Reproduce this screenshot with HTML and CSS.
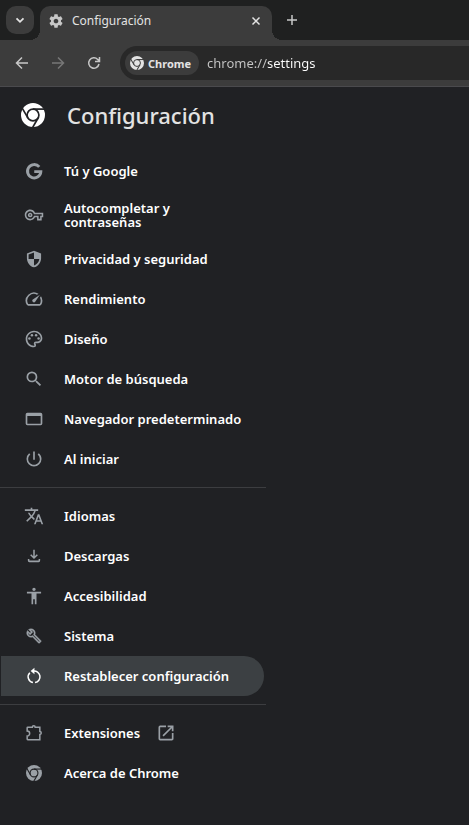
FILE: index.html
```html
<!DOCTYPE html>
<html lang="es">
<head>
<meta charset="utf-8">
<meta name="viewport" content="width=device-width, initial-scale=1">
<title>Configuración</title>
<link rel="stylesheet" href="styles.css">
</head>
<body>
<svg class="defs" aria-hidden="true">
  <mask id="chrome-mask">
    <circle cx="12" cy="12" r="12" fill="#fff"/>
    <g stroke="#000" stroke-width="1.7" fill="none">
      <circle cx="12" cy="12" r="5.9"/>
      <path d="M12 6.1H24"/>
      <path d="M12 6.1H24" transform="rotate(120 12 12)"/>
      <path d="M12 6.1H24" transform="rotate(240 12 12)"/>
    </g>
  </mask>
  <symbol id="chrome" viewBox="0 0 24 24"><rect width="24" height="24" mask="url(#chrome-mask)"/></symbol>
</svg>

<header class="browser">
  <div class="tabstrip">
    <button class="tab-search" aria-label="Buscar pestañas"><svg viewBox="0 0 12 12"><path class="line bold" d="M2.500 4.300 6 7.800l3.500-3.500"/></svg></button>
    <div class="tab">
      <svg class="tab-icon" viewBox="0 0 24 24"><path d="M19.430 12.980c.04-.32.07-.64.07-.98s-.03-.66-.07-.98l2.110-1.650c.19-.15.24-.42.12-.64l-2-3.460c-.12-.22-.39-.3-.61-.22l-2.490 1c-.52-.4-1.080-.73-1.690-.98l-.38-2.650C14.460 2.180 14.250 2 14 2h-4c-.25 0-.46.18-.49.42l-.38 2.650c-.61.25-1.170.59-1.690.98l-2.490-1c-.23-.09-.49 0-.61.22l-2 3.460c-.13.22-.07.49.12.64l2.110 1.650c-.04.32-.07.65-.07.98s.03.66.07.98l-2.110 1.650c-.19.15-.24.42-.12.64l2 3.460c.12.22.39.3.61.22l2.490-1c.52.4 1.080.73 1.690.98l.38 2.650c.03.24.24.42.49.42h4c.25 0 .46-.18.49-.42l.38-2.650c.61-.25 1.170-.59 1.690-.98l2.490 1c.23.09.49 0 .61-.22l2-3.460c.12-.22.07-.49-.12-.64l-2.110-1.650zM12 15.500c-1.930 0-3.500-1.570-3.500-3.500s1.570-3.500 3.500-3.500 3.500 1.570 3.500 3.500-1.570 3.500-3.500 3.500z"/></svg>
      <span class="tab-title">Configuración</span>
      <button class="tab-close" aria-label="Cerrar"><svg viewBox="0 0 12 12"><path class="line" d="m2.500 2.500 7 7m0-7-7 7"/></svg></button>
    </div>
    <button class="new-tab" aria-label="Nueva pestaña"><svg viewBox="0 0 12 12"><path class="line" d="M6 1v10M1 6h10"/></svg></button>
  </div>
  <div class="toolbar">
    <button class="nav-button" aria-label="Atrás"><svg viewBox="0 0 16 16"><path class="line" d="M14 8H2.500M8 2.500 2.500 8 8 13.500"/></svg></button>
    <button class="nav-button disabled" aria-label="Adelante" disabled><svg viewBox="0 0 16 16"><path class="line" d="M2 8h11.500M8 2.500 13.500 8 8 13.500"/></svg></button>
    <button class="nav-button" aria-label="Recargar"><svg viewBox="0 0 16 16"><path class="line" d="M13 9a5.200 5.200 0 1 1-1.300-4.600L13.500 6.200M13.500 2v4.500H9"/></svg></button>
    <div class="omnibox">
      <button class="chip"><svg><use href="#chrome"/></svg>Chrome</button>
      <input class="url" type="text" aria-label="Dirección" value="chrome://settings">
    </div>
  </div>
</header>

<main class="settings">
  <div class="brand">
    <svg><use href="#chrome"/></svg>
    <h1>Configuración</h1>
  </div>
  <nav class="menu" aria-label="Configuración">
    <a class="item" href="#people"><svg viewBox="0 0 24 24"><path class="g-line" d="M18.300 7.100A8 8 0 1 0 20.200 12.700H12.300"/></svg><span>Tú y Google</span></a>
    <a class="item tall" href="#autofill"><svg viewBox="-1 -1 26 26"><path d="M22 19h-6v-4h-2.680c-1.140 2.420-3.600 4-6.320 4-3.860 0-7-3.140-7-7s3.140-7 7-7c2.720 0 5.170 1.580 6.320 4H24v6h-2v4zm-4-2h2v-4h2v-2H11.940l-.23-.67C11.010 8.340 9.110 7 7 7c-2.760 0-5 2.240-5 5s2.240 5 5 5c2.110 0 4.010-1.340 4.710-3.330l.23-.67H18v4zM7 15c-1.650 0-3-1.350-3-3s1.350-3 3-3 3 1.350 3 3-1.350 3-3 3zm0-4c-.55 0-1 .45-1 1s.45 1 1 1 1-.45 1-1-.45-1-1-1z"/></svg><span>Autocompletar y contraseñas</span></a>
    <a class="item" href="#privacy"><svg viewBox="0 0 24 24"><path d="M12 2 3.500 5.400V11c0 5.200 3.600 9.700 8.500 11 4.900-1.300 8.500-5.800 8.500-11V5.400zm0 2.200V12h6.400c-.5 3.700-3 6.800-6.400 7.900V12H5.500V6.700z"/></svg><span>Privacidad y seguridad</span></a>
    <a class="item" href="#performance"><svg viewBox="0 0 24 24"><path d="m20.380 8.570-1.230 1.850a8 8 0 0 1-.22 7.580H5.070A8 8 0 0 1 15.580 6.850l1.850-1.230A10 10 0 0 0 3.350 19a2 2 0 0 0 1.720 1h13.850a2 2 0 0 0 1.740-1 10 10 0 0 0-.27-10.440zm-9.790 6.840a2 2 0 0 0 2.830 0l5.660-8.490-8.490 5.660a2 2 0 0 0 0 2.830z"/></svg><span>Rendimiento</span></a>
    <a class="item" href="#appearance"><svg viewBox="0 0 24 24"><path d="M12 22C6.490 22 2 17.510 2 12S6.490 2 12 2s10 4.040 10 9c0 3.310-2.690 6-6 6h-1.770c-.28 0-.5.22-.5.5 0 .12.050.23.130.33.41.47.64 1.060.64 1.670A2.500 2.500 0 0 1 12 22zm0-18c-4.410 0-8 3.590-8 8s3.590 8 8 8c.28 0 .5-.22.5-.5a.54.54 0 0 0-.14-.35c-.41-.46-.63-1.050-.63-1.650a2.500 2.500 0 0 1 2.500-2.500H16c2.210 0 4-1.790 4-4 0-3.860-3.590-7-8-7z"/><circle cx="6.500" cy="11.500" r="1.500"/><circle cx="9.500" cy="7.500" r="1.500"/><circle cx="14.500" cy="7.500" r="1.500"/><circle cx="17.500" cy="11.500" r="1.500"/></svg><span>Diseño</span></a>
    <a class="item" href="#search"><svg viewBox="0 0 24 24"><path d="M15.500 14h-.79l-.28-.27A6.471 6.471 0 0 0 16 9.500 6.500 6.500 0 1 0 9.500 16c1.610 0 3.090-.59 4.230-1.570l.27.28v.79l5 4.990L20.490 19l-4.990-5zm-6 0C7.010 14 5 11.990 5 9.500S7.010 5 9.500 5 14 7.010 14 9.500 11.990 14 9.500 14z"/></svg><span>Motor de búsqueda</span></a>
    <a class="item" href="#default-browser"><svg viewBox="0 0 24 24"><path d="M20 4.500H4a2 2 0 0 0-2 2v11a2 2 0 0 0 2 2h16a2 2 0 0 0 2-2v-11a2 2 0 0 0-2-2zm0 13.200H4V8.300h16z"/></svg><span>Navegador predeterminado</span></a>
    <a class="item" href="#startup"><svg viewBox="0 0 24 24"><path d="M13 3h-2v10h2V3zm4.830 2.170-1.420 1.420A6.920 6.920 0 0 1 19 12c0 3.870-3.130 7-7 7s-7-3.130-7-7c0-2.190 1.010-4.140 2.580-5.420L6.170 5.170A8.932 8.932 0 0 0 3 12a9 9 0 0 0 18 0c0-2.740-1.230-5.180-3.170-6.830z"/></svg><span>Al iniciar</span></a>
    <hr>
    <a class="item" href="#languages"><svg viewBox="0 0 24 24"><path d="m12.870 15.070-2.540-2.510.03-.03A17.520 17.520 0 0 0 14.070 6H17V4h-7V2H8v2H1v1.990h11.170C11.500 7.920 10.440 9.750 9 11.350 8.070 10.320 7.300 9.190 6.690 8h-2c.73 1.630 1.730 3.170 2.980 4.560l-5.090 5.020L4 19l5-5 3.110 3.110.76-2.040zM18.500 10h-2L12 22h2l1.120-3h4.750L21 22h2l-4.500-12zm-2.620 7 1.620-4.330L19.120 17h-3.240z"/></svg><span>Idiomas</span></a>
    <a class="item" href="#downloads"><svg viewBox="-1 -1 26 26"><path d="m12 16-5-5 1.400-1.400 2.600 2.600V4h2v8.200l2.600-2.600L17 11zm-6 4a2 2 0 0 1-2-2v-2h2v2h12v-2h2v2a2 2 0 0 1-2 2z"/></svg><span>Descargas</span></a>
    <a class="item" href="#accessibility"><svg viewBox="0 0 24 24"><path d="M12 2c1.100 0 2 .9 2 2s-.9 2-2 2-2-.9-2-2 .9-2 2-2zm8.500 7H15v13h-2v-6h-2v6H9V9H3.500V7h17v2z"/></svg><span>Accesibilidad</span></a>
    <a class="item" href="#system"><svg viewBox="-3 -3 30 30"><path d="m22.610 18.990-9.080-9.080c.93-2.340.45-5.100-1.440-7C9.790.61 6.210.4 3.660 2.260L7.500 6.110 6.080 7.520 2.250 3.690C.39 6.230.6 9.820 2.900 12.110c1.860 1.860 4.570 2.350 6.890 1.480l9.110 9.110c.39.39 1.020.39 1.410 0l2.300-2.300c.4-.38.4-1.010 0-1.410zm-3 1.600-9.460-9.460c-.61.45-1.290.72-2 .82-1.360.2-2.790-.21-3.830-1.250C3.370 9.760 2.930 8.500 3 7.260l3.090 3.090 4.240-4.240-3.090-3.090c1.240-.07 2.490.37 3.440 1.310 1.080 1.080 1.490 2.570 1.240 3.960-.12.71-.42 1.370-.88 1.960l9.450 9.450z" stroke="currentColor" stroke-width=".5"/></svg><span>Sistema</span></a>
    <a class="item selected" href="#reset" aria-current="page"><svg viewBox="0 0 24 24"><path class="outline" d="M10.700 19.900A7 7 0 0 1 7 8.100M13.300 19.900A7 7 0 0 0 11 6"/><path d="M12.500 2v8L8 6z"/></svg><span>Restablecer configuración</span></a>
    <hr>
    <a class="item" href="#extensions"><svg viewBox="0 0 24 24"><path class="outline" d="M4.500 5H10a1.700 1.700 0 0 1 3.400 0H19v5.300a1.700 1.700 0 0 1 0 3.400V20H4.500q-.7 0-.7-.7v-3.800a3 3 0 0 0 0-6V5.700q0-.7.7-.7z"/></svg><span>Extensiones</span><svg class="launch" viewBox="0 0 24 24"><path d="M19 19H5V5h7V3H5a2 2 0 0 0-2 2v14a2 2 0 0 0 2 2h14c1.100 0 2-.9 2-2v-7h-2v7zM14 3v2h3.590l-9.830 9.830 1.410 1.410L19 6.410V10h2V3h-7z"/></svg></a>
    <a class="item about" href="#help"><svg><use href="#chrome"/></svg><span>Acerca de Chrome</span></a>
  </nav>
</main>
</body>
</html>
```
FILE: styles.css
```css
* { box-sizing: border-box; }
body {
  margin: 0;
  min-height: 100vh;
  background: #202124;
  color: #fff;
  font-family: "Segoe UI", "Noto Sans", sans-serif;
  overflow-x: hidden;
}
svg { fill: currentColor; display: block; flex: none; }
button { border: 0; padding: 0; background: none; color: inherit; font: inherit; }
.defs { position: absolute; width: 0; height: 0; }
.line { fill: none; stroke: currentColor; stroke-width: 1.5; }
.bold { stroke-width: 1.8; }

.browser { background: #3c3c3c; border-bottom: 1px solid #4a4a4d; }
.tabstrip {
  display: flex;
  align-items: flex-start;
  height: 40px;
  padding: 6px 6px 0;
  background: #1f2020;
}
.tab-search {
  display: grid;
  place-items: center;
  width: 28px;
  height: 28px;
  border-radius: 10px;
  background: #3c3c3c;
  color: #e3e3e3;
}
.tab-search svg { width: 12px; height: 12px; }
.tab {
  position: relative;
  display: flex;
  align-items: center;
  width: 232px;
  height: 34px;
  margin-left: 6px;
  padding: 0 10px 5px 8px;
  border-radius: 10px 10px 0 0;
  background: #3c3c3c;
  font-size: 12px;
}
.tab::before, .tab::after {
  content: "";
  position: absolute;
  bottom: 0;
  width: 10px;
  height: 10px;
}
.tab::before { right: 100%; background: radial-gradient(circle at 0 0, transparent 10px, #3c3c3c 10px); }
.tab::after { left: 100%; background: radial-gradient(circle at 100% 0, transparent 10px, #3c3c3c 10px); }
.tab-icon { width: 16px; height: 16px; color: #c7c7c7; }
.tab-title { flex: 1; margin-left: 8px; color: #e3e3e3; }
.tab-close { color: #e3e3e3; }
.tab-close svg { width: 12px; height: 12px; }
.new-tab { margin: 8px 0 0 14px; color: #c7c7c7; }
.new-tab svg { width: 12px; height: 12px; }

.toolbar { display: flex; align-items: center; height: 46px; padding-left: 14px; }
.nav-button { width: 16px; margin-right: 20px; color: #c7c7c7; }
.nav-button svg { width: 16px; height: 16px; }
.nav-button.disabled { color: #777; }
.omnibox {
  display: flex;
  align-items: center;
  flex: 1;
  min-width: 0;
  height: 34px;
  margin-left: -2px;
  padding-left: 5px;
  border-radius: 17px 0 0 17px;
  background: #282828;
}
.chip {
  display: flex;
  align-items: center;
  gap: 4px;
  height: 24px;
  padding: 0 8px 0 5px;
  border-radius: 12px;
  background: #3c3c3c;
  color: #e3e3e3;
  font-size: 11px;
  font-weight: 700;
}
.chip svg { width: 14px; height: 14px; }
.url {
  flex: 1;
  min-width: 0;
  margin-left: 8px;
  padding: 0;
  border: 0;
  outline: 0;
  background: linear-gradient(90deg, #c7c7c7 60px, #fff 60px) text;
  color: transparent;
  font: 13px/20px "Segoe UI", "Noto Sans", sans-serif;
}

.brand { display: flex; align-items: center; height: 56px; padding-left: 21px; }
.brand svg { width: 24px; height: 24px; }
h1 { margin: 0 0 0 22px; color: #e3e3e3; font-size: 22px; font-weight: 500; line-height: 28px; }
.menu { max-width: 266px; padding: 8px 0 32px; }
.item {
  display: flex;
  align-items: center;
  min-height: 40px;
  margin: 0 2px 0 1px;
  padding: 0 20px 0 23px;
  border-radius: 0 20px 20px 0;
  color: #fff;
  font-size: 13px;
  font-weight: 600;
  line-height: 14px;
  text-decoration: none;
}
.tall { min-height: 48px; padding-right: 60px; }
.item svg { width: 20px; height: 20px; margin-right: 20px; color: #9aa0a6; }
.item span { white-space: nowrap; }
.tall span { white-space: normal; }
.g-line { fill: none; stroke: currentColor; stroke-width: 3.5; }
.outline { fill: none; stroke: currentColor; stroke-width: 1.8; }
.item .launch { margin: 0 0 0 16px; }
.selected { background: #3c4043; }
.selected svg { color: #fff; }
.about svg { width: 16px; height: 16px; margin: 0 22px 0 2px; }
hr { height: 1px; margin: 8px 0; border: 0; background: #3c3d40; }
```
